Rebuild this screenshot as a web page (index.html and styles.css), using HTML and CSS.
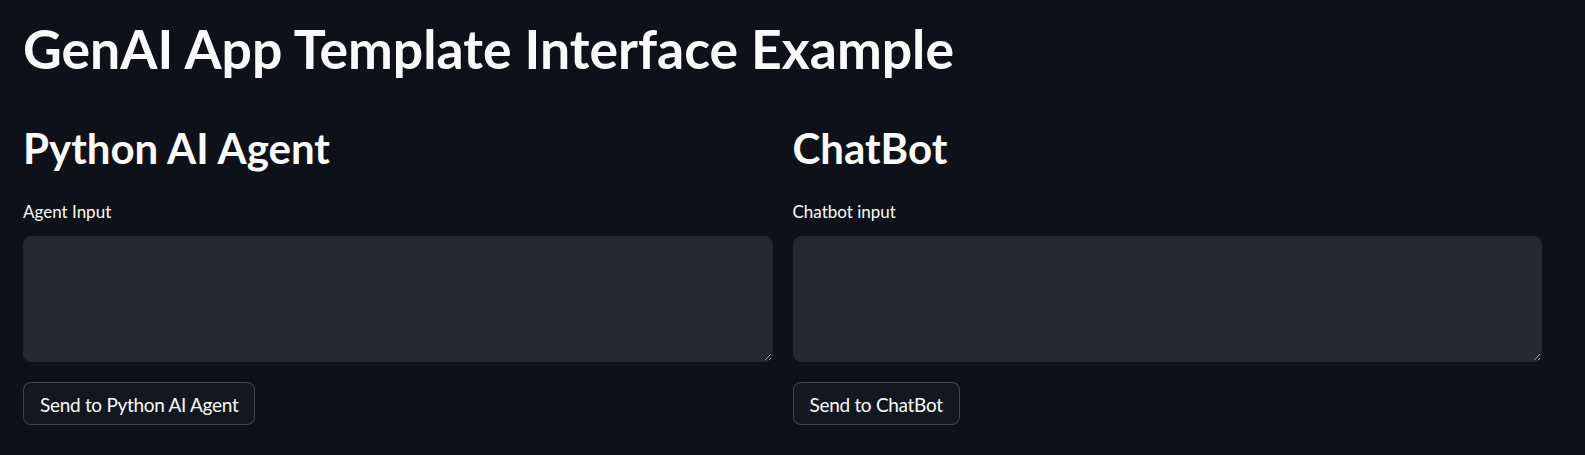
FILE: index.html
```html
<!DOCTYPE html>
<html lang="en">
<head>
<meta charset="utf-8">
<title>GenAI App Template Interface Example</title>
<link rel="stylesheet" href="styles.css">
</head>
<body>
<main class="page">
  <h1 class="title">GenAI App Template Interface Example</h1>
  <div class="columns">
    <section class="col">
      <h2 class="heading">Python AI Agent</h2>
      <label class="label" for="agent">Agent Input</label>
      <textarea id="agent" class="input"></textarea>
      <button class="btn" type="button">Send to Python AI Agent</button>
    </section>
    <section class="col">
      <h2 class="heading">ChatBot</h2>
      <label class="label" for="chat">Chatbot input</label>
      <textarea id="chat" class="input"></textarea>
      <button class="btn" type="button">Send to ChatBot</button>
    </section>
  </div>
</main>
</body>
</html>
```
FILE: styles.css
```css
html, body {
  margin: 0;
  padding: 0;
  background: #0e1117;
  color: #fafafa;
  font-family: Lato, "Noto Sans", sans-serif;
}

.page {
  padding: 16px 43px 0 23px;
}

.title {
  margin: 0;
  font-size: 53.5px;
  line-height: 1.2;
  font-weight: 700;
  letter-spacing: 0;
}

.columns {
  display: grid;
  grid-template-columns: 1fr 1fr;
  column-gap: 20px;
  margin-top: 43px;
}

.col {
  display: flex;
  flex-direction: column;
  align-items: flex-start;
  min-width: 0;
}

.heading {
  margin: 0;
  font-size: 42px;
  line-height: 1.2;
  font-weight: 700;
}

.label {
  margin-top: 28px;
  font-size: 17px;
  line-height: 1.2;
}

.input {
  box-sizing: border-box;
  margin-top: 14px;
  width: 100%;
  height: 126px;
  background: #262730;
  border: 1px solid #262730;
  border-radius: 8px;
  color: #fafafa;
  resize: vertical;
  outline: none;
  padding: 12px;
  font-family: inherit;
}

.btn {
  box-sizing: border-box;
  margin-top: 20px;
  height: 43px;
  padding: 3px 16px 0;
  background: #131720;
  border: 1px solid rgba(250, 250, 250, 0.2);
  border-radius: 8px;
  color: #fafafa;
  font-family: inherit;
  font-size: 19px;
  letter-spacing: -0.3px;
  line-height: 1.2;
}
```
